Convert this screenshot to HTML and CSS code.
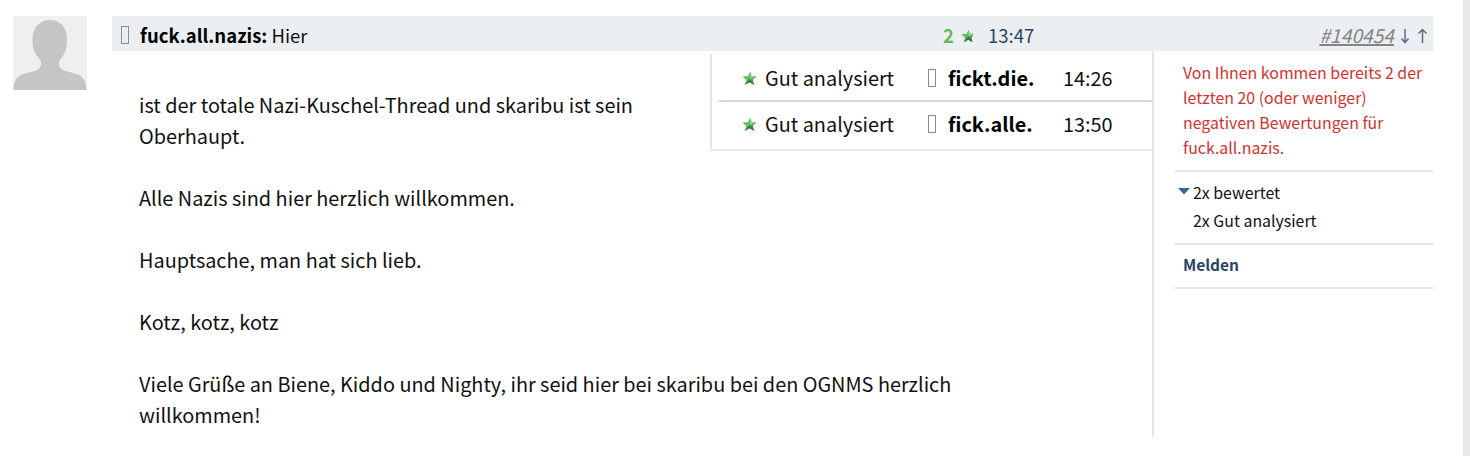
FILE: index.html
```html
<!DOCTYPE html>
<html lang="de">
<head>
	<meta charset="UTF-8">
	<title>Hier</title>
	<link rel="stylesheet" href="styles.css">
</head>

<body>
<svg class="defs" width="0" height="0">
	<defs>
		<linearGradient id="green" x1="0" y1="0" x2="1" y2="1">
			<stop offset="0" stop-color="#3f9a42"/>
			<stop offset="0.45" stop-color="#65c065"/>
			<stop offset="1" stop-color="#2c6a2c"/>
		</linearGradient>
		<symbol id="star" viewBox="0 0 15 15">
			<path d="M8.3 .6 L9.7 5.2 L14.6 5.6 L10.8 8.7 L12.2 13.9 L7.8 11.2 L2.6 14 L4.3 9 L.6 5.5 L6 5.2 Z" fill="url(#green)"/>
			<path d="M8.3 .6 L9.7 5.2 L14.6 5.6 L8 8 Z" fill="#85dc80"/>
			<path d="M7.8 8 L2.6 14 L7.8 11.2 L12.2 13.9 Z" fill="#286029" opacity=".65"/>
		</symbol>
		<symbol id="star-cut" viewBox="0 0 13 15">
			<path d="M8.3 .6 L9.4 5.2 L12.6 4.6 L12.6 8 L11.4 9 L12.4 14 L7.8 11.6 L3 14.2 L4.3 9.4 L.6 5.5 L6 5.4 Z" fill="url(#green)"/>
			<path d="M8.3 .6 L9.4 5.2 L12.6 4.6 L12.6 6.5 L8 8 Z" fill="#85dc80"/>
			<path d="M7.8 8 L3 14.2 L7.8 11.6 L12.4 14 Z" fill="#286029" opacity=".7"/>
		</symbol>
	</defs>
</svg>
<div id="page">
	<div class="avatar">
		<svg width="74" height="74" viewBox="0 0 74 74">
			<path d="M37 4 C26 4 19.5 12 19.5 24 C19.5 33 22 38 26.5 43 C29.5 47 28.5 52 23 54.5 L14 57 C5 59 .5 64 .5 74 L73.5 74 C73.5 64 69 59 60 57 L51 54.5 C45.5 52 44.5 47 47.5 43 C52 38 54 33 54 24 C54 12 48 4 37 4 Z" fill="#c5c5c5"/>
		</svg>
	</div>
	<div id="post">
		<div class="head">
			<i class="box"></i>
			<div class="subject"><b>fuck.all.nazis:</b> Hier</div>
			<b class="count">2</b>
			<svg class="star small"><use href="#star-cut"/></svg>
			<span class="time">13:47</span>
			<a class="number">#140454</a>
			<svg class="arrows" width="28" height="18" viewBox="0 0 28 18">
				<path d="M5 2 V15.500 M1.500 11.500 L5 15.500 L8.500 11.500 M22.500 16 V2.500 M18.500 6.500 L22.500 2.500 L26.500 6.500"/>
			</svg>
		</div>
		<div class="main">
			<div class="body">
				<div class="votes">
					<div class="vote">
						<svg class="star"><use href="#star"/></svg>
						<span class="label">Gut analysiert</span>
						<i class="box"></i>
						<b>fickt.die.</b>
						<span>14:26</span>
					</div>
					<div class="vote">
						<svg class="star"><use href="#star"/></svg>
						<span class="label">Gut analysiert</span>
						<i class="box"></i>
						<b>fick.alle.</b>
						<span>13:50</span>
					</div>
				</div>
				<div class="text">
					<p>ist der totale Nazi-Kuschel-Thread und skaribu ist sein<br>Oberhaupt.</p>
					<p>Alle Nazis sind hier herzlich willkommen.</p>
					<p>Hauptsache, man hat sich lieb.</p>
					<p>Kotz, kotz, kotz</p>
					<p>Viele Grüße an Biene, Kiddo und Nighty, ihr seid hier bei skaribu bei den OGNMS herzlich<br>willkommen!</p>
				</div>
			</div>
			<div class="side">
				<div class="warning">Von Ihnen kommen bereits 2 der<br>letzten 20 (oder weniger)<br>negativen Bewertungen für<br>fuck.all.nazis.</div>
				<div class="rated">
					<svg width="12" height="7" viewBox="0 0 12 7"><path d="M0 0 H12 L6 6.500 Z" fill="#3d6591"/></svg>
					<div>2x bewertet<br>2x Gut analysiert</div>
				</div>
				<div class="report"><b>Melden</b></div>
			</div>
		</div>
	</div>
</div>
</body>
</html>
```
FILE: styles.css
```css
html, body {
	margin: 0;
	padding: 0;
	background: #fff;
}
body {
	font-family: "Noto Sans CJK SC", sans-serif;
	font-size: 19.86px;
	line-height: 31px;
	color: #111;
	white-space: nowrap;
	overflow: hidden;
}
b {
	color: #000;
}
.defs {
	display: block;
}
#page {
	box-sizing: border-box;
	width: 1470px;
	height: 456px;
	padding: 16px 30px 0 13px;
	border-right: 7px solid #e8e8e8;
	display: flex;
	gap: 25px;
}
.avatar {
	width: 74px;
	height: 74px;
	background: #efefef;
}
.avatar svg {
	display: block;
}
#post {
	width: 1321px;
}
.head {
	display: flex;
	align-items: center;
	height: 35px;
	padding: 3px 5px 0 9px;
	box-sizing: border-box;
	background: #ebeff2;
	font-size: 18.5px;
	line-height: 30px;
}
.box {
	box-sizing: border-box;
	width: 8px;
	height: 18px;
	border: 1px solid #8c8c8c;
	flex: none;
}
.head .box {
	margin: 0 11px 1px 0;
}
.subject {
	width: 803px;
}
.count {
	color: #6ab55e;
	width: 18px;
}
.star {
	width: 15px;
	height: 15px;
	margin-top: 2px;
	flex: none;
}
.small {
	width: 12px;
	height: 14px;
}
.time {
	color: #274765;
	margin-left: 15px;
}
.number {
	margin-left: auto;
	color: #858585;
	font-size: 19.2px;
	font-style: italic;
	text-decoration: underline;
	text-decoration-thickness: 1.5px;
}
.arrows {
	margin: 1px 0 0 6px;
	fill: none;
	stroke: #606794;
	stroke-width: 1.5;
}
.main {
	display: flex;
}
.body {
	width: 1040px;
	height: 385px;
	border-right: 2px solid #e5e6e8;
}
.votes {
	float: right;
	box-sizing: border-box;
	width: 442px;
	height: 97px;
	margin-top: 3px;
	padding-left: 7px;
	border-left: 2px solid #e5e6e8;
	border-bottom: 2px solid #e5e6e8;
}
.vote {
	display: flex;
	align-items: center;
	height: 46px;
	padding-left: 23px;
}
.vote .box {
	margin-top: 1px;
}
.vote + .vote {
	border-top: 2px solid #d3dce3;
	height: 42px;
}
.vote .label {
	width: 163px;
	margin-left: 8px;
}
.vote b {
	width: 115px;
	margin-left: 12px;
}
.text {
	padding: 38px 0 0 27px;
}
p {
	margin: 0 0 31px;
}
.side {
	width: 258px;
	margin-left: 21px;
	font-size: 15.9px;
}
.warning {
	height: 110px;
	padding: 9px 0 0 8px;
	line-height: 25px;
	color: #d0342f;
}
.rated {
	display: flex;
	gap: 3px;
	height: 64px;
	padding: 7px 0 0 3px;
	line-height: 28px;
	border-top: 2px solid #e5e5e5;
}
.rated svg {
	margin-top: 9px;
}
.report {
	height: 37px;
	padding: 5px 0 0 8px;
	line-height: 28px;
	border-top: 2px solid #e5e5e5;
	border-bottom: 2px solid #e5e5e5;
	font-size: 15.5px;
}
.report b {
	color: #274765;
}
```
